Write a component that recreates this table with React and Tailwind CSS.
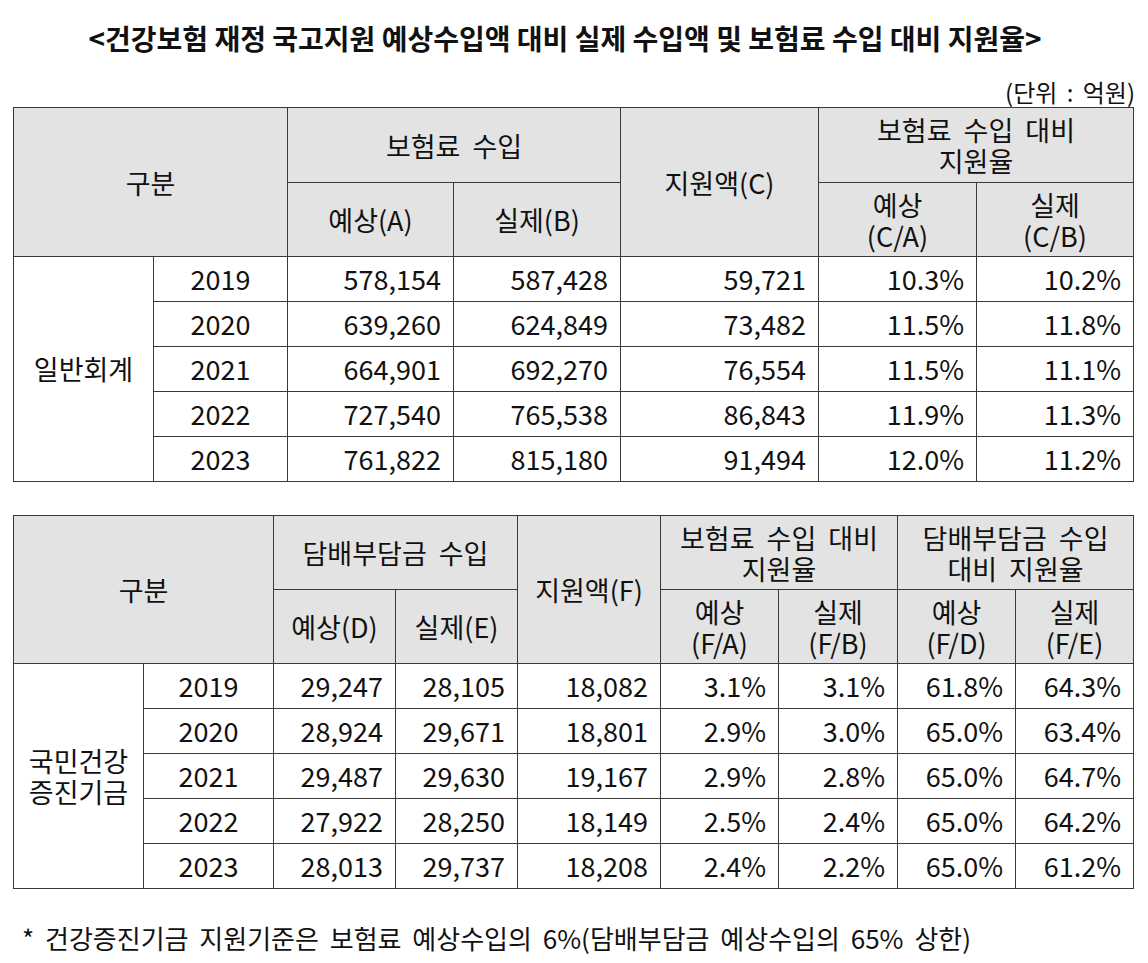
import React from "react";

const general = [
  ["2019", "578,154", "587,428", "59,721", "10.3%", "10.2%"],
  ["2020", "639,260", "624,849", "73,482", "11.5%", "11.8%"],
  ["2021", "664,901", "692,270", "76,554", "11.5%", "11.1%"],
  ["2022", "727,540", "765,538", "86,843", "11.9%", "11.3%"],
  ["2023", "761,822", "815,180", "91,494", "12.0%", "11.2%"],
];

const fund = [
  ["2019", "29,247", "28,105", "18,082", "3.1%", "3.1%", "61.8%", "64.3%"],
  ["2020", "28,924", "29,671", "18,801", "2.9%", "3.0%", "65.0%", "63.4%"],
  ["2021", "29,487", "29,630", "19,167", "2.9%", "2.8%", "65.0%", "64.7%"],
  ["2022", "27,922", "28,250", "18,149", "2.5%", "2.4%", "65.0%", "64.2%"],
  ["2023", "28,013", "29,737", "18,208", "2.4%", "2.2%", "65.0%", "61.2%"],
];

const th = "bg-[#e3e3e3] font-normal border border-[#3a3a3a] text-center align-middle leading-[31px] [word-spacing:6px]";
const td = "border border-[#3a3a3a] text-right pr-3 align-middle";
const tdYear = "border border-[#3a3a3a] text-center align-middle";

function App() {
  return (
    <div className="w-[1148px] h-[963px] bg-white text-[#111] px-[13px] font-['Noto_Sans_CJK_KR',sans-serif]">
      <h1 className="pt-[20px] pr-[18px] text-center text-[28px] font-bold leading-[36px]">
        &lt;건강보험 재정 국고지원 예상수입액 대비 실제 수입액 및 보험료 수입 대비 지원율&gt;
      </h1>
      <div className="mt-[21px] text-right text-[24px] leading-[30px] [word-spacing:4px]">(단위 : 억원)</div>

      {/* 일반회계 */}
      <table className="w-[1120px] table-fixed border-collapse text-[27px]">
        <colgroup>
          <col className="w-[140px]" />
          <col className="w-[134px]" />
          <col className="w-[166px]" />
          <col className="w-[167px]" />
          <col className="w-[198px]" />
          <col className="w-[158px]" />
          <col className="w-[157px]" />
        </colgroup>
        <thead>
          <tr className="h-[75px]">
            <th colSpan={2} rowSpan={2} className={th}>구분</th>
            <th colSpan={2} className={th}>보험료 수입</th>
            <th rowSpan={2} className={th}>지원액(C)</th>
            <th colSpan={2} className={th}>보험료 수입 대비<br />지원율</th>
          </tr>
          <tr className="h-[74px]">
            <th className={th}>예상(A)</th>
            <th className={th}>실제(B)</th>
            <th className={th}>예상<br />(C/A)</th>
            <th className={th}>실제<br />(C/B)</th>
          </tr>
        </thead>
        <tbody>
          {general.map((r, i) => (
            <tr key={r[0]} className="h-[45px]">
              {i === 0 && (
                <td rowSpan={5} className="border border-[#3a3a3a] text-center align-middle">일반회계</td>
              )}
              <td className={tdYear}>{r[0]}</td>
              {r.slice(1).map((v, j) => (
                <td key={j} className={td}>{v}</td>
              ))}
            </tr>
          ))}
        </tbody>
      </table>

      {/* 국민건강증진기금 */}
      <table className="mt-[33px] w-[1120px] table-fixed border-collapse text-[27px]">
        <colgroup>
          <col className="w-[130px]" />
          <col className="w-[130px]" />
          <col className="w-[122px]" />
          <col className="w-[122px]" />
          <col className="w-[143px]" />
          <col className="w-[118px]" />
          <col className="w-[119px]" />
          <col className="w-[118px]" />
          <col className="w-[118px]" />
        </colgroup>
        <thead>
          <tr className="h-[74px]">
            <th colSpan={2} rowSpan={2} className={th}>구분</th>
            <th colSpan={2} className={th}>담배부담금 수입</th>
            <th rowSpan={2} className={th}>지원액(F)</th>
            <th colSpan={2} className={th}>보험료 수입 대비<br />지원율</th>
            <th colSpan={2} className={th}>담배부담금 수입<br />대비 지원율</th>
          </tr>
          <tr className="h-[74px]">
            <th className={th}>예상(D)</th>
            <th className={th}>실제(E)</th>
            <th className={th}>예상<br />(F/A)</th>
            <th className={th}>실제<br />(F/B)</th>
            <th className={th}>예상<br />(F/D)</th>
            <th className={th}>실제<br />(F/E)</th>
          </tr>
        </thead>
        <tbody>
          {fund.map((r, i) => (
            <tr key={r[0]} className="h-[45px]">
              {i === 0 && (
                <td rowSpan={5} className="border border-[#3a3a3a] text-center align-middle leading-[31px]">
                  국민건강<br />증진기금
                </td>
              )}
              <td className={tdYear}>{r[0]}</td>
              {r.slice(1).map((v, j) => (
                <td key={j} className={td}>{v}</td>
              ))}
            </tr>
          ))}
        </tbody>
      </table>

      <p className="mt-[32px] pl-[9px] text-[26px] leading-[34px] [word-spacing:5px]">
        * 건강증진기금 지원기준은 보험료 예상수입의 6%(담배부담금 예상수입의 65% 상한)
      </p>
    </div>
  );
}

export default App;
